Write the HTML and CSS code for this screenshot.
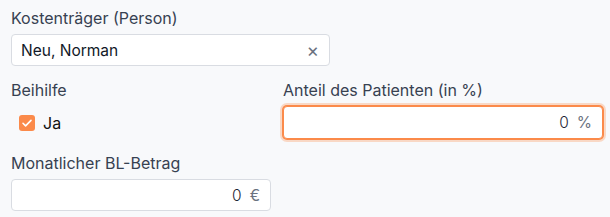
FILE: index.html
```html
<!DOCTYPE html>
<html lang="de">
<head>
    <meta charset="UTF-8">
    <title>Kostenträger</title>
    <link rel="stylesheet" href="styles.css">
</head>
<body>
    <div class="formBox">
        <div class="field fieldWide">
            <label class="label">Kostenträger (Person)</label>
            <div class="input inputSelect">
                <span class="value">Neu, Norman</span>
                <span class="clear">&times;</span>
            </div>
        </div>

        <div class="field">
            <label class="label">Beihilfe</label>
            <div class="checkRow">
                <span class="checkBox">
                    <svg width="12" height="12" viewBox="0 0 12 12"><path d="M2 6.3l2.6 2.6L10 3.4" fill="none" stroke="#fff" stroke-width="1.6" stroke-linecap="round" stroke-linejoin="round"/></svg>
                </span>
                <span class="checkText">Ja</span>
            </div>
        </div>
        <div class="field">
            <label class="label">Anteil des Patienten (in %)</label>
            <div class="input inputNum focus">
                <span class="value">0</span>
                <span class="unit">%</span>
            </div>
        </div>

        <div class="field">
            <label class="label">Monatlicher BL-Betrag</label>
            <div class="input inputNum">
                <span class="value">0</span>
                <span class="unit">€</span>
            </div>
        </div>
    </div>
</body>
</html>
```

FILE: styles.css
```css
* {
    box-sizing: border-box;
    margin: 0;
    padding: 0;
}
body {
    background-color: #f8f9fb;
    font-family: Inter, "Noto Sans", sans-serif;
    color: #374151;
}
.formBox {
    display: grid;
    grid-template-columns: 260px 320px;
    column-gap: 12px;
    row-gap: 14px;
    padding: 8px 11px;
}
.field {
    display: flex;
    flex-direction: column;
    gap: 6px;
}
.fieldWide {
    grid-column: 1 / 3;
}
.fieldWide .input {
    width: 319px;
}
.label {
    font-size: 16px;
    line-height: 20px;
    color: #374151;
}
.input {
    height: 32px;
    background-color: #fff;
    border: 1px solid #d9dce2;
    border-radius: 4px;
    display: flex;
    align-items: center;
    padding: 0 10px 0 9px;
    font-size: 15.5px;
    color: #111827;
}
.inputSelect {
    justify-content: space-between;
}
.clear {
    color: #6b7280;
    font-size: 19px;
    line-height: 1;
}
.inputNum {
    justify-content: flex-end;
    gap: 8px;
    color: #1f2937;
}
.inputNum .value {
    font-weight: 300;
}
.unit {
    color: #6b7280;
}
.focus {
    height: 33px;
    border: 1px solid #fb8a4a;
    box-shadow: 0 0 0 1px #fb8a4a, 0 0 0 3px rgba(251, 138, 74, 0.3);
}
.checkRow {
    height: 33px;
    display: flex;
    align-items: center;
    padding-left: 8px;
    gap: 8px;
}
.checkBox {
    width: 16px;
    height: 16px;
    border-radius: 3px;
    background-color: #fb8a4a;
    display: flex;
    align-items: center;
    justify-content: center;
}
.checkText {
    font-size: 16px;
    color: #111;
}
```
